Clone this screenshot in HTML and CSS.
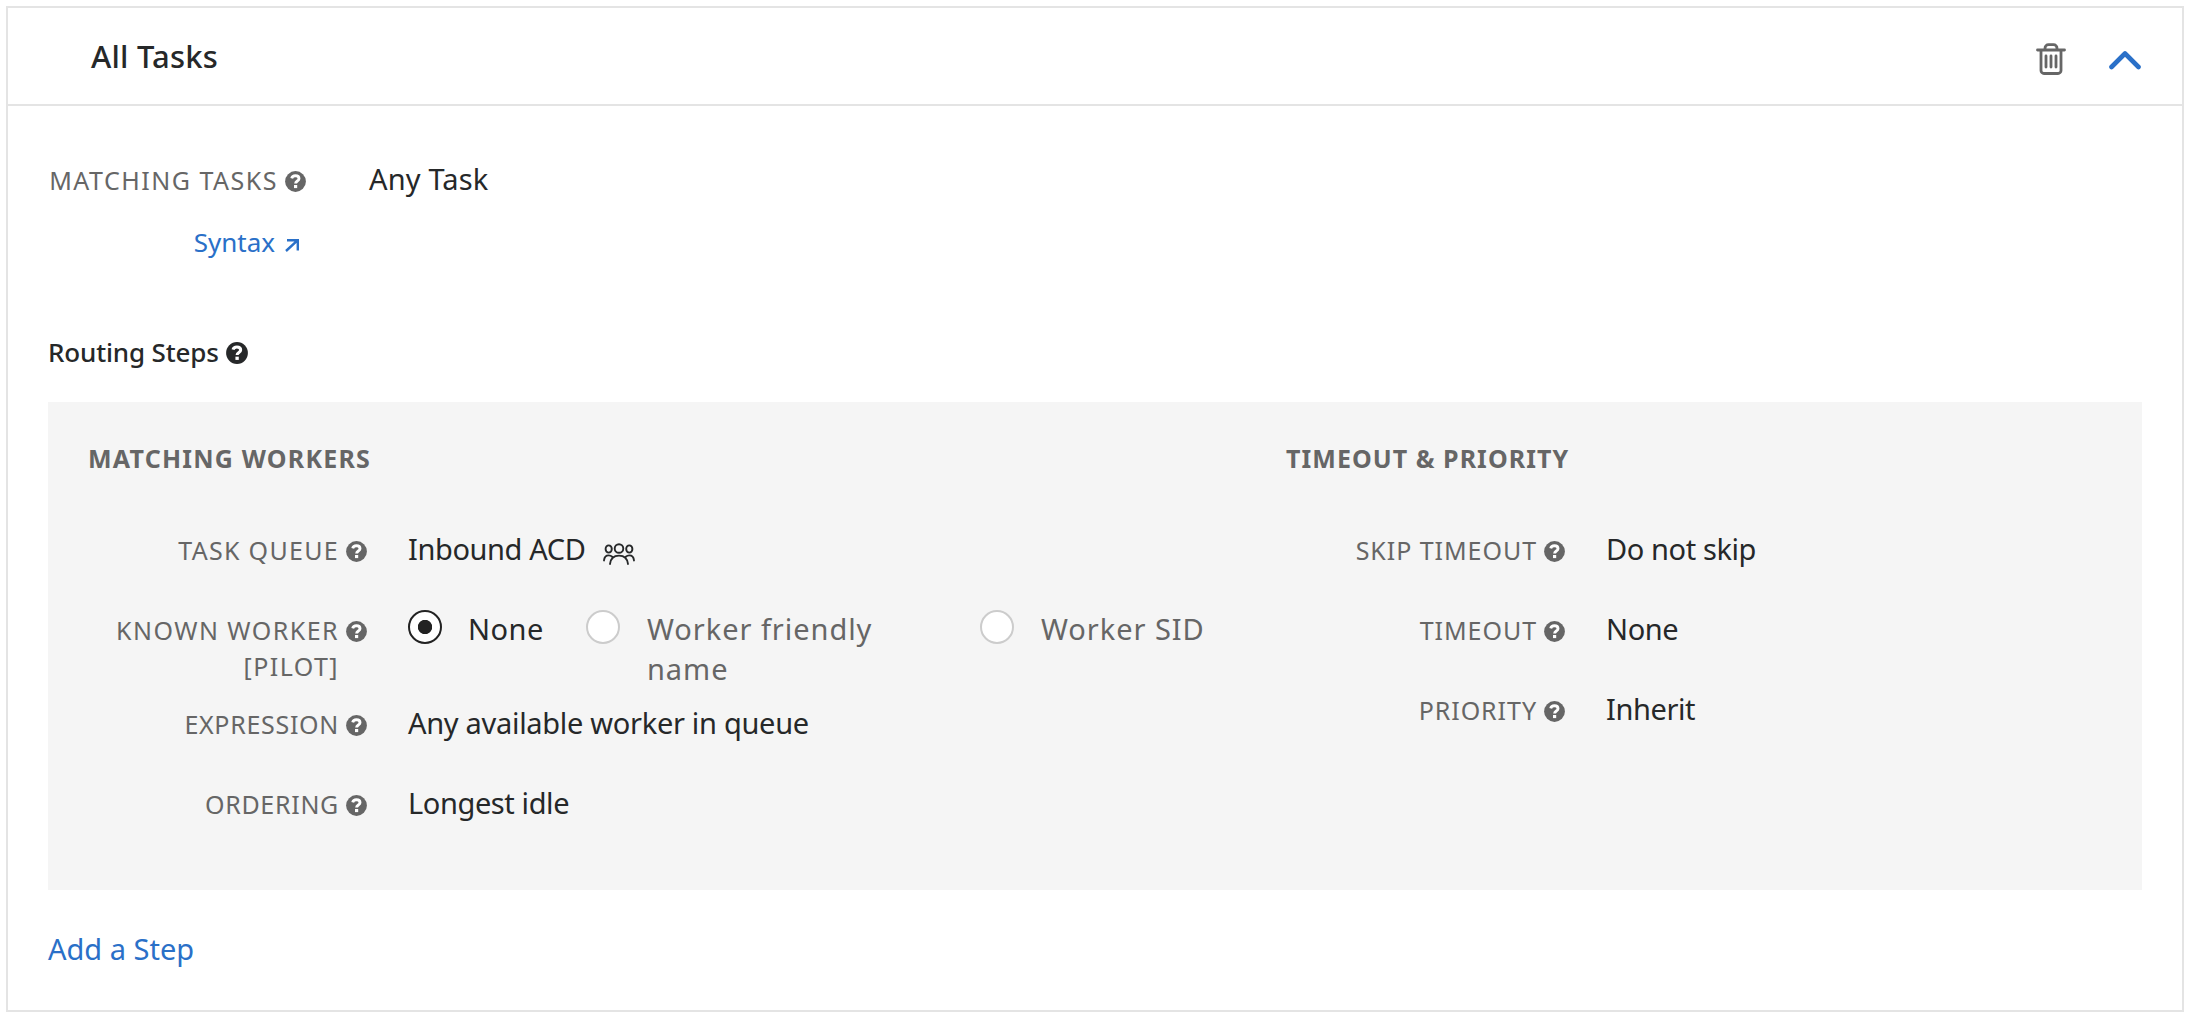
FILE: index.html
```html
<!DOCTYPE html>
<html lang="en">
<head>
<meta charset="utf-8">
<title>All Tasks</title>
<link rel="stylesheet" href="styles.css">
</head>
<body>
<svg width="0" height="0" class="sprite" aria-hidden="true">
  <symbol id="help" viewBox="0 0 21 21">
    <circle cx="10.5" cy="10.5" r="10.4" fill="currentColor"/>
    <path class="mark" d="M6.700 7.300C7.200 5.500 8.600 4.800 10.400 4.800c2.100 0 3.600 1.100 3.600 2.900 0 2.400-3.400 2.200-3.400 4.700"/>
    <rect class="dot" x="9" y="14" width="3.200" height="3.100"/>
  </symbol>
</svg>
<section class="card">
  <header class="card-header">
    <h1 class="card-title">All Tasks</h1>
    <div class="actions">
      <svg class="trash" viewBox="0 0 30 34"><path d="M1.500 8h27M5 8v20.500a3 3 0 0 0 3 3h14a3 3 0 0 0 3-3V8M9 8V6.200a3.500 3.500 0 0 1 3.500-3.500h5a3.500 3.500 0 0 1 3.500 3.500V8"/><path d="M10 14v11M15 14v11M20 14v11"/></svg>
      <svg class="chevron" viewBox="0 0 32 20"><path d="M2.500 17 16 3.500 29.500 17"/></svg>
    </div>
  </header>
  <div class="card-body">
    <div class="row match">
      <div class="label"><span>MATCHING TASKS</span><svg class="help"><use href="#help"/></svg></div>
      <div class="value">Any Task</div>
    </div>
    <a class="syntax">Syntax<svg class="arrow" viewBox="0 0 14 13"><path d="M1 12 12.500 1.300M2 1.200h10.800V11.500"/></svg></a>
    <h2 class="routing">Routing Steps<svg class="help large" viewBox="0 0 21 21"><use href="#help"/></svg></h2>
    <div class="panel">
      <div class="column workers">
        <h3 class="heading">MATCHING WORKERS</h3>
        <div class="row"><div class="label"><span>TASK QUEUE</span><svg class="help"><use href="#help"/></svg></div>
          <div class="value queue">Inbound ACD<svg class="people" viewBox="0 0 32 22"><circle cx="16" cy="5.500" r="4.300"/><ellipse cx="5.700" cy="6" rx="3.100" ry="3.600"/><ellipse cx="26.300" cy="6" rx="3.100" ry="3.600"/><path d="M7 21c.6-5.300 4-8.400 9-8.400s8.400 3.100 9 8.400M1 17.500c.3-3.300 2-5.100 4.700-5.100 1.500 0 2.500.4 3.500 1.300M31 17.500c-.3-3.300-2-5.100-4.700-5.100-1.500 0-2.500.4-3.500 1.300"/></svg></div></div>
        <div class="row known"><div class="label"><span>KNOWN WORKER<br>[PILOT]</span><svg class="help"><use href="#help"/></svg></div>
          <div class="options">
            <div class="option selected"><i class="radio"></i><span>None</span></div>
            <div class="option friendly"><i class="radio"></i><span>Worker friendly name</span></div>
            <div class="option"><i class="radio"></i><span>Worker SID</span></div>
          </div></div>
        <div class="row"><div class="label snug"><span>EXPRESSION</span><svg class="help"><use href="#help"/></svg></div><div class="value long">Any available worker in queue</div></div>
        <div class="row"><div class="label snug"><span>ORDERING</span><svg class="help"><use href="#help"/></svg></div><div class="value">Longest idle</div></div>
      </div>
      <div class="column timing">
        <h3 class="heading">TIMEOUT &amp; PRIORITY</h3>
        <div class="row"><div class="label"><span>SKIP TIMEOUT</span><svg class="help"><use href="#help"/></svg></div><div class="value">Do not skip</div></div>
        <div class="row"><div class="label"><span>TIMEOUT</span><svg class="help"><use href="#help"/></svg></div><div class="value">None</div></div>
        <div class="row"><div class="label"><span>PRIORITY</span><svg class="help"><use href="#help"/></svg></div><div class="value">Inherit</div></div>
      </div>
    </div>
    <a class="add">Add a Step</a>
  </div>
</section>
</body>
</html>
```
FILE: styles.css
```css
* { box-sizing: border-box; }
body { margin: 0; padding: 6px; background: #fff; color: #262829; font-family: "Noto Sans", sans-serif; }
h1, h2, h3 { margin: 0; }
svg { display: block; flex: none; fill: none; stroke-linecap: round; stroke-linejoin: round; }
.sprite { position: absolute; }

.card { width: 2178px; height: 1006px; border: 2px solid #e4e4e4; }
.card-header { display: flex; justify-content: space-between; height: 98px; padding: 28px 41px 0 83px; border-bottom: 2px solid #e4e4e4; }
.card-title { font-size: 31px; line-height: 42px; font-weight: 500; letter-spacing: .2px; margin-top: -1px; }
.actions { display: flex; gap: 43px; }
.trash { width: 30px; height: 34px; margin-top: 6px; stroke: #666; stroke-width: 2.800; }
.chevron { width: 32px; height: 20px; margin-top: 14px; stroke: #2a70c8; stroke-width: 4.600; }

.card-body { display: flex; flex-direction: column; align-items: flex-start; padding: 53px 40px 0; }
.row { display: flex; height: 80px; }
.label { display: flex; justify-content: flex-end; gap: 7px; width: 279px; margin-right: 41px; padding-top: 3px; color: #666; font-size: 25px; line-height: 36px; letter-spacing: 1.300px; text-align: right; white-space: nowrap; }
.label.snug { letter-spacing: .700px; }
.help { width: 21px; height: 21px; margin-top: 9px; stroke: none; }
.mark { fill: none; stroke: #fff; stroke-width: 2.900; stroke-linecap: butt; }
.dot { fill: #fff; stroke: none; }
.value { font-size: 29px; line-height: 40px; letter-spacing: -.400px; white-space: nowrap; }
.value.long { letter-spacing: -.300px; }
.match { height: 65px; }
.match .label { width: 258px; margin-right: 63px; letter-spacing: 1.500px; }
.match .value { letter-spacing: .150px; }

.syntax { display: flex; width: 251px; justify-content: flex-end; gap: 10px; color: #2a70c8; font-size: 26px; line-height: 36px; }
.arrow { width: 14px; height: 13px; margin-top: 15px; stroke: currentColor; stroke-width: 2.400; stroke-linecap: butt; stroke-linejoin: miter; }
.routing { display: flex; gap: 7px; margin-top: 74px; font-size: 26px; line-height: 36px; font-weight: 500; letter-spacing: -.150px; }
.help.large { width: 22px; height: 22px; margin-top: 8px; }

.panel { display: flex; width: 2094px; height: 488px; margin-top: 32px; padding: 38px 40px; background: #f5f5f5; }
.workers { width: 1198px; }
.heading { height: 89px; color: #666; font-size: 25px; line-height: 36px; font-weight: 700; letter-spacing: 1.200px; }
.timing .heading { letter-spacing: 1.050px; }
.timing .label { letter-spacing: .950px; }
.queue { display: flex; gap: 18px; }
.people { width: 32px; height: 22px; margin-top: 14px; stroke: #262829; stroke-width: 1.900; }
.known { height: 94px; }
.known .label { letter-spacing: 1.450px; }
.options { display: flex; color: #666; font-size: 29px; line-height: 40px; letter-spacing: .950px; }
.option { display: flex; gap: 27px; }
.option.selected { gap: 26px; width: 178px; color: #262829; letter-spacing: .500px; }
.option.friendly { width: 394px; }
.friendly span { width: 250px; }
.radio { flex: none; width: 34px; height: 34px; margin-top: 1px; border: 2px solid #ccc; border-radius: 50%; background: #fff; }
.selected .radio { border-color: #222; background: radial-gradient(circle, #222 6.800px, #fff 7.500px); }

.add { margin-top: 39px; color: #2a70c8; font-size: 29px; line-height: 40px; }
```
